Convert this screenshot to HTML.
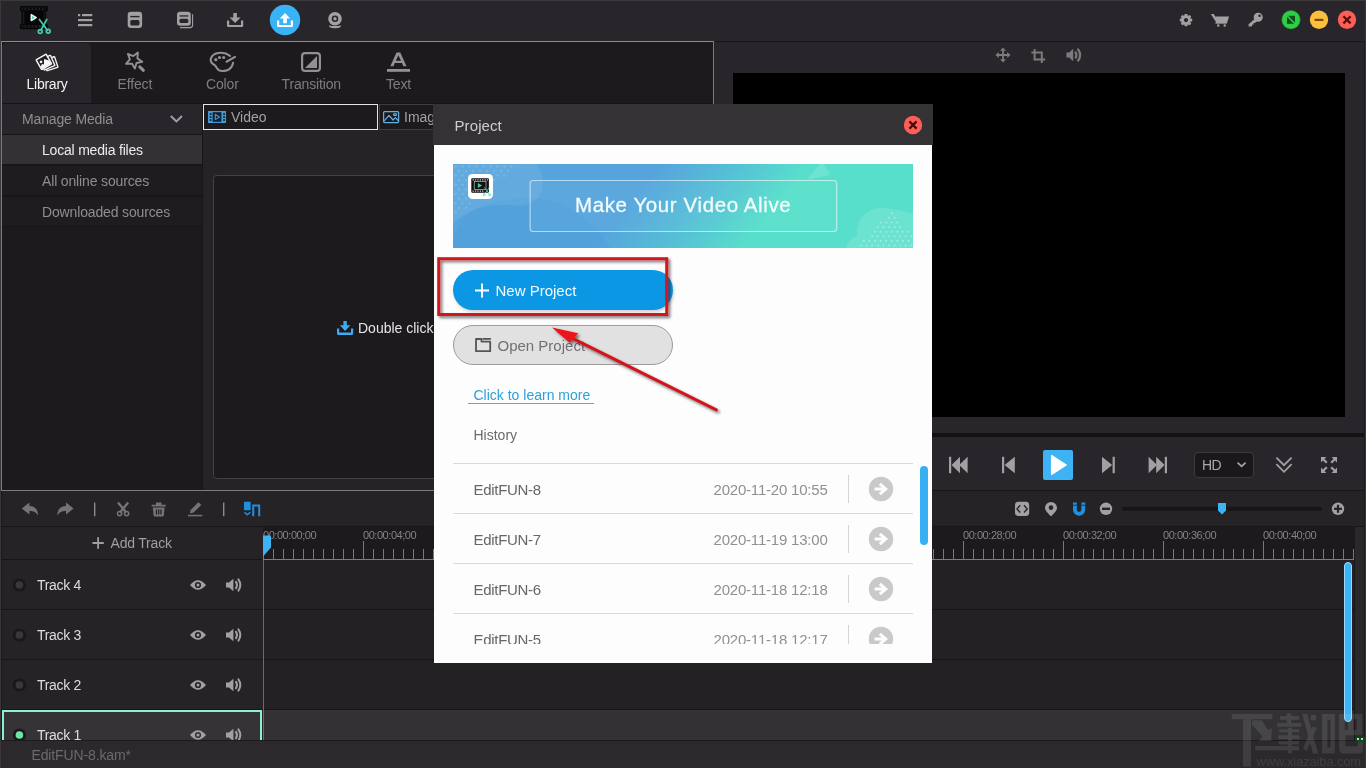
<!DOCTYPE html>
<html>
<head>
<meta charset="utf-8">
<title>EditFUN</title>
<style>
*{box-sizing:border-box;margin:0;padding:0}
html,body{width:1366px;height:768px;overflow:hidden;background:#252326;font-family:"Liberation Sans",sans-serif;}
#app{will-change:transform;position:fixed;left:0;top:0;width:1366px;height:768px;overflow:hidden;background:#252326;}
.abs{position:absolute}
.t{position:absolute;white-space:nowrap;line-height:1}
svg{position:absolute;overflow:visible}
/* top bar */
#topbar{left:0;top:0;width:1366px;height:41px;background:#28262a}
/* left panel */
#leftpanel{left:1px;top:41px;width:713px;height:450px;border:1px solid #7d7b7e;border-top-color:#8e8c8f;background:#252326}
#tabbar{left:2px;top:42px;width:711px;height:62px;background:#1c1a1d}
#tab-lib{left:2px;top:43px;width:89px;height:61px;background:#28262a;border-radius:5px 5px 0 0}
.tablabel{font-size:14px;color:#7f7d80;letter-spacing:-0.150px}
#sidebar{left:2px;top:104px;width:201px;height:386px;background:#171518}
.srow{left:2px;width:200px;height:29px;background:#1e1c1f}
.stext{font-size:14px;color:#8f8d90;letter-spacing:-0.150px}
#droparea{left:213px;top:175px;width:260px;height:304px;background:#1c1a1d;border:1px solid #434144;border-radius:3.500px}
/* right panel */
#preview{left:733px;top:73px;width:612px;height:344px;background:#000}
/* timeline */
.trow{left:2px;width:260px;height:49px;background:#252326}
.hline{height:1px;background:#161417;left:0}
.ttext{font-size:14px;color:#dddddd;letter-spacing:-0.300px}
.rtext{font-size:11px;color:#858386;letter-spacing:-0.450px}
/* dialog */
#dlg{left:434px;top:104px;width:498px;height:559px;background:#fdfdfd}
#dlgtitle{left:433px;top:104px;width:500px;height:41px;background:#343235}
.hrow{font-size:15px;color:#666}
.hdate{font-size:15px;color:#909090}
.hsep{height:1px;background:#dcdcdc;left:453px;width:460px}
</style>
</head>
<body>
<div id="app">
<div class="abs" id="topbar"></div>
<svg id="svgtop" class="abs" style="left:0;top:0" width="1366" height="41" viewBox="0 0 1366 41">
  <!-- logo -->
  <g>
    <path d="M21.200 6 h25.300 a1.300 1.300 0 0 1 1.300 1.300 v2.600 a1.600 1.600 0 0 1 -1.600 1.600 v12.200 a1.600 1.600 0 0 1 1.600 1.600 v2.600 a1.300 1.300 0 0 1 -1.300 1.300 h-25.300 a1.300 1.300 0 0 1 -1.300 -1.300 v-2.600 a1.600 1.600 0 0 1 1.600 -1.600 v-12.200 a1.600 1.600 0 0 1 -1.600 -1.600 v-2.600 a1.300 1.300 0 0 1 1.300 -1.300 z" fill="#060606"/>
    <rect x="21.600" y="7.600" width="24.600" height="2.600" fill="#232124"/>
    <rect x="21.600" y="25" width="24.600" height="2.600" fill="#232124"/>
    <rect x="22.900" y="11.400" width="1.500" height="12.400" fill="#1c1a1d"/><rect x="44.200" y="11.400" width="1.200" height="12.400" fill="#1c1a1d"/>
    <g fill="#060606"><rect x="22.6" y="8" width="2" height="1.800"/><rect x="26.1" y="8" width="2" height="1.800"/><rect x="29.6" y="8" width="2" height="1.800"/><rect x="33.1" y="8" width="2" height="1.800"/><rect x="36.6" y="8" width="2" height="1.800"/><rect x="40.1" y="8" width="2" height="1.800"/><rect x="43.6" y="8" width="2" height="1.800"/><rect x="22.6" y="25.400" width="2" height="1.800"/><rect x="26.1" y="25.400" width="2" height="1.800"/><rect x="29.6" y="25.400" width="2" height="1.800"/><rect x="33.1" y="25.400" width="2" height="1.800"/><rect x="36.6" y="25.400" width="2" height="1.800"/></g>
    <path d="M31.300 14.600 L31.300 20.600 L36.200 17.600 Z" fill="#4fd0b4" stroke="#e6f7f3" stroke-width="1.500" stroke-linejoin="round"/>
    <g stroke="#46cbae" stroke-width="1.700" fill="none" stroke-linecap="round">
      <path d="M39.400 19.400 L47.400 30.200"/><path d="M46.800 19.400 L41 30.200"/>
      <circle cx="40.200" cy="31.600" r="1.900"/><circle cx="48.200" cy="31.200" r="1.900"/>
    </g>
  </g>
  <!-- menu -->
  <g fill="#a2a0a3">
    <rect x="78" y="14" width="2.2" height="2.2"/><rect x="82" y="14" width="10.3" height="2.2"/>
    <rect x="78" y="19" width="14.3" height="2.2"/>
    <rect x="78" y="24" width="14.3" height="2.2"/>
  </g>
  <!-- save -->
  <g>
    <rect x="127.700" y="11.700" width="14.400" height="16.300" rx="3.200" fill="#a2a0a3"/>
    <rect x="130.300" y="15.900" width="9.200" height="1.400" fill="#28262a"/>
    <rect x="130.300" y="20" width="9.200" height="5.500" rx="1.600" fill="#28262a"/>
  </g>
  <!-- save as -->
  <g>
    <path d="M180 27.600 H190 a2.600 2.600 0 0 0 2.600 -2.600 V14.200" fill="none" stroke="#a2a0a3" stroke-width="1.100"/>
    <rect x="177" y="11.700" width="13.800" height="14" rx="3.200" fill="#a2a0a3"/>
    <rect x="179.500" y="15.300" width="8.800" height="1.300" fill="#28262a"/>
    <rect x="179.500" y="18.800" width="8.800" height="4.300" rx="1.500" fill="#28262a"/>
  </g>
  <!-- download -->
  <g fill="#a2a0a3">
    <path d="M233.3 13 h3.6 v4.4 h3.7 l-5.5 5.6 l-5.5 -5.6 h3.7 z"/>
    <path d="M227 20.6 h2.2 v4.3 h11.8 v-4.3 h2.2 v5.2 a1.3 1.3 0 0 1 -1.3 1.3 h-13.6 a1.3 1.3 0 0 1 -1.3 -1.3 z"/>
  </g>
  <!-- upload circle -->
  <circle cx="285" cy="20" r="15.2" fill="#39b3f7"/>
  <g fill="#ffffff">
    <path d="M283.2 23.2 h3.6 v-4.6 h3.4 l-5.2 -5.6 l-5.2 5.6 h3.4 z"/>
    <path d="M277 20.6 h2.2 v4.3 h11.6 v-4.3 h2.2 v5.2 a1.3 1.3 0 0 1 -1.3 1.3 h-13.4 a1.3 1.3 0 0 1 -1.3 -1.3 z"/>
  </g>
  <!-- webcam -->
  <g>
    <circle cx="335" cy="18.8" r="6.8" fill="#a2a0a3"/>
    <circle cx="335" cy="18.8" r="2.5" fill="none" stroke="#28262a" stroke-width="1.6"/>
    <path d="M329.6 25.3 q5.4 3.2 10.8 0 l0.6 1.4 q-6 3.2 -12 0 z" fill="#a2a0a3"/>
    <rect x="331" y="26" width="8" height="1.8" rx="0.9" fill="#a2a0a3"/>
  </g>
  <!-- gear -->
  <g transform="translate(1186 20.100)">
    <g fill="#a2a0a3">
      <rect x="-1.500" y="-6.200" width="3" height="12.400" rx="0.700"/>
      <rect x="-1.500" y="-6.200" width="3" height="12.400" rx="0.700" transform="rotate(45)"/>
      <rect x="-1.500" y="-6.200" width="3" height="12.400" rx="0.700" transform="rotate(90)"/>
      <rect x="-1.500" y="-6.200" width="3" height="12.400" rx="0.700" transform="rotate(135)"/>
      <circle r="4.800"/>
    </g>
    <circle r="2.100" fill="#28262a"/>
  </g>
  <!-- cart -->
  <g fill="#a2a0a3">
    <path d="M1210.800 14 h3 l1.300 2.600 h14 l-2.100 6.400 h-10.400 z"/>
    <path d="M1215.400 22.400 h11.400 v1.300 h-11.400 z"/>
    <rect x="1217.200" y="24.400" width="2.200" height="2.200"/><rect x="1223.600" y="24.400" width="2.200" height="2.200"/>
  </g>
  <!-- key -->
  <g>
    <circle cx="1258.200" cy="17.200" r="4.500" fill="#a2a0a3"/>
    <circle cx="1259.600" cy="15.800" r="1.300" fill="#28262a"/>
    <path d="M1255.400 18.200 l2.200 2.200 l-2.600 2.600 h-1.400 v1.400 h-1.400 v1.400 l-0.800 0.800 h-2.800 v-2.400 z" fill="#a2a0a3"/>
  </g>
  <!-- window buttons -->
  <circle cx="1291" cy="19.8" r="9.2" fill="#2ecf47"/><circle cx="1291" cy="19.8" r="9.2" fill="none" stroke="#1f9a33" stroke-width="1" opacity=".6"/>
  <path d="M1287 15.8 h8 v8 h-8 z" fill="#0d4f18"/>
  <path d="M1287 15.8 l8 8" stroke="#2ecf47" stroke-width="1.6"/>
  <circle cx="1319" cy="19.8" r="9.2" fill="#fcbf3d"/>
  <rect x="1314.6" y="18.8" width="8.8" height="2.2" fill="#7a4a05"/>
  <circle cx="1347" cy="19.8" r="9.2" fill="#fb5f57"/>
  <path d="M1343.4 16.2 l7.2 7.2 M1350.6 16.2 l-7.2 7.2" stroke="#5c0b08" stroke-width="2.2"/>
</svg>

<div class="abs" id="leftpanel"></div>
<div class="abs" id="tabbar"></div>
<div class="abs" id="tab-lib"></div>
<div class="abs" id="sidebar"></div>
<div class="abs" style="left:2px;top:103px;width:711px;height:1px;background:#151316"></div>
<div class="abs" style="left:2px;top:104px;width:200px;height:30px;background:#28262a"></div>
<div class="abs srow" style="top:135px;background:#333134"></div>
<div class="abs srow" style="top:166px"></div>
<div class="abs srow" style="top:197px"></div>
<div class="abs" style="left:2px;top:227px;width:200px;height:263px;background:#1c1a1d"></div>
<div class="t tablabel" id="tl1" style="left:26.500px;top:77px;color:#f2f2f2;letter-spacing:-0.250px">Library</div>
<div class="t tablabel" id="tl2" style="left:117.500px;top:77px">Effect</div>
<div class="t tablabel" id="tl3" style="left:206px;top:77px">Color</div>
<div class="t tablabel" id="tl4" style="left:281.500px;top:77px">Transition</div>
<div class="t tablabel" id="tl5" style="left:386px;top:77px">Text</div>
<div class="t stext" id="st0" style="left:22px;top:112px">Manage Media</div>
<div class="t stext" id="st1" style="left:42px;top:143px;color:#ececec;letter-spacing:-0.200px">Local media files</div>
<div class="t stext" id="st2" style="left:42px;top:174px">All online sources</div>
<div class="t stext" id="st3" style="left:42px;top:205px">Downloaded sources</div>
<!-- sub tabs -->
<div class="abs" style="left:203px;top:104px;width:511px;height:26px;background:#1c1a1d"></div>
<div class="abs" style="left:203px;top:104px;width:175px;height:26px;border:1px solid #e6e6e6;background:#1c1a1d"></div>
<div class="abs" style="left:379px;top:104px;width:175px;height:26px;border:1px solid #3f3d40"></div>
<div class="t" id="vt" style="left:231px;top:110px;font-size:14px;color:#a3a1a4">Video</div>
<div class="t" id="it" style="left:404px;top:110px;font-size:14px;color:#a3a1a4">Image</div>
<div class="abs" id="droparea"></div>
<div class="t" id="dc" style="left:358px;top:321px;font-size:14px;color:#e4e4e4">Double click</div>
<svg class="abs" style="left:0;top:41px" width="714" height="450" viewBox="0 41 714 450">
  <!-- library icon -->
  <g>
    <g transform="translate(50.750 63.700) rotate(-18)"><rect x="-5.800" y="-5.550" width="11.600" height="11.100" rx="0.500" fill="#28262a" stroke="#f2f2f2" stroke-width="1.400"/></g>
    <g transform="translate(47.400 62.700) rotate(-24)"><rect x="-5.800" y="-5.550" width="11.600" height="11.100" rx="0.500" fill="#28262a" stroke="#f2f2f2" stroke-width="1.400"/></g>
    <g transform="translate(43.850 61.850) rotate(-30)">
      <rect x="-5.750" y="-5.500" width="11.500" height="11" rx="0.500" fill="#201e21" stroke="#f6f6f6" stroke-width="1.500"/>
      <circle cx="-2.400" cy="-1.400" r="1.350" fill="#f6f6f6"/>
      <path d="M-5.200 5 v-2.400 l2.400 -1.600 l1.600 1.300 l2.800 -4.600 l3.600 3.800 v3.500 z" fill="#f6f6f6"/>
    </g>
  </g>
  <!-- effect icon -->
  <g fill="none" stroke="#929093" stroke-width="1.900" stroke-linejoin="round">
    <path d="M137.9 52.5 L137.4 58.4 L142.3 61.7 L136.5 63.0 L134.9 68.6 L131.9 63.6 L126.0 63.8 L129.9 59.4 L127.9 53.9 L133.3 56.1 Z"/>
    <path d="M139.800 66.800 l3.600 3.500" stroke-width="3" stroke-linecap="round"/>
  </g>
  <!-- color icon -->
  <g fill="none" stroke="#929093" stroke-width="2.100" stroke-linecap="round" stroke-linejoin="round">
    <path d="M230 55.800 C227 53.500 224 52.800 221.300 52.800 C217 52.800 214 54 212.400 55.900 C210.600 58 210.300 60.600 211.400 62.400 C212.200 63.700 214 64.400 215.200 65.600 C216.500 67 216.800 68.600 218.400 69.800 C220 71 222.500 71.200 224.500 70.900 C227.500 70.500 230 69 231.500 66.800 C232.400 65.500 232.900 64 233 62.700"/>
    <path d="M226.600 61.700 l8.400 -4.800" stroke-width="2.200"/>
  </g>
  <g fill="#929093"><circle cx="215.800" cy="59.700" r="1.650"/><circle cx="219.500" cy="57.500" r="1.600"/><circle cx="223.700" cy="57.500" r="1.600"/></g>
  <!-- transition icon -->
  <rect x="302.100" y="53.100" width="17.800" height="17.800" rx="3" fill="none" stroke="#929093" stroke-width="2.200"/>
  <path d="M305 68 h12 v-12 z" fill="#929093"/>
  <!-- text icon -->
  <g fill="#929093">
    <path d="M396.500 52.600 h3.800 l6.200 13.600 h-3.200 l-1.300 -3.100 h-7.200 l-1.300 3.100 h-3.200 z M398.400 55.600 l-2.600 5.200 h5.200 z" fill-rule="evenodd"/>
    <rect x="387" y="69" width="23" height="2.800"/>
  </g>
  <!-- chevron -->
  <path d="M170.8 116 l5.6 5.4 l5.6 -5.4" fill="none" stroke="#a2a0a3" stroke-width="2"/>
  <!-- video icon -->
  <g>
    <rect x="208" y="111" width="18" height="12" fill="#4199d6"/>
    <rect x="212.600" y="112.200" width="8.800" height="9.600" fill="#14202b"/>
    <g fill="#102a40"><rect x="209.7" y="113.1" width="1.700" height="1.900"/><rect x="209.7" y="116.1" width="1.700" height="1.900"/><rect x="209.7" y="119.1" width="1.700" height="1.900"/><rect x="223.2" y="113.1" width="1.700" height="1.900"/><rect x="223.2" y="116.1" width="1.700" height="1.900"/><rect x="223.2" y="119.1" width="1.700" height="1.900"/></g>
    <path d="M215.300 114.400 v5.200 l4.200 -2.600 z" fill="none" stroke="#4199d6" stroke-width="1.100" stroke-linejoin="round"/>
  </g>
  <!-- image icon -->
  <g fill="none" stroke="#62aee0" stroke-width="1.250">
    <rect x="383.600" y="111.600" width="15" height="11" rx="1"/>
    <path d="M384 121.200 l5 -5.800 l4 4.600 l2.400 -2.400 l3.200 3.400" stroke-linejoin="round"/>
    <ellipse cx="395" cy="114.600" rx="1.500" ry="1"/>
  </g>
  <!-- double click dl icon -->
  <g fill="#3dacf0">
    <path d="M343.4 321 h3.4 v4.2 h3.6 l-5.3 5.8 l-5.3 -5.8 h3.6 z"/>
    <path d="M337 328.4 h2.2 v4.2 h11.8 v-4.2 h2.2 v5.2 a1.3 1.3 0 0 1 -1.3 1.3 h-13.6 a1.3 1.3 0 0 1 -1.3 -1.3 z"/>
  </g>
</svg>

<div class="abs" style="left:715px;top:42px;width:649px;height:448px;background:#28262a"></div>
<div class="abs" style="left:715px;top:41px;width:651px;height:1px;background:#19171a"></div>
<div class="abs" style="left:1364px;top:41px;width:1px;height:700px;background:#1b191c"></div>
<div class="abs" id="preview"></div>
<div class="abs" style="left:715px;top:433px;width:649px;height:4px;background:#131114"></div>
<div class="abs" style="left:1043px;top:450px;width:30px;height:30px;background:#3db3f6;border-radius:2px"></div>
<div class="abs" style="left:1194px;top:452px;width:60px;height:26px;background:#1a181b;border:1px solid #3c3a3d;border-radius:4px"></div>
<div class="t" id="hd" style="left:1202px;top:458px;font-size:14px;color:#a9a7aa;letter-spacing:-0.600px">HD</div>
<div class="abs" style="left:715px;top:490px;width:651px;height:1px;background:#171518"></div>
<svg class="abs" style="left:714px;top:41px" width="652" height="490" viewBox="714 41 652 490">
  <!-- move -->
  <g fill="#7c7a7d">
    <path d="M1003 47.400000000000006 l3 3.4 h-2.1 v3.3 h3.3 v-2.1 l3.4 3 l-3.4 3 v-2.1 h-3.3 v3.3 h2.1 l-3 3.4 l-3 -3.4 h2.1 v-3.3 h-3.3 v2.1 l-3.4 -3 l3.4 -3 v2.1 h3.3 v-3.3 h-2.1 z"/>
  </g>
  <!-- crop -->
  <g fill="none" stroke="#7c7a7d" stroke-width="2">
    <path d="M1034.600 49 v10.600 h10.600"/>
    <path d="M1031.400 52.400 h10.400 v10.600"/>
  </g>
  <!-- volume -->
  <g fill="#7c7a7d">
    <path d="M1066.4 52.4 h2.800000000000001 l4 -3.6 v12.4 l-4 -3.6 h-2.800000000000001 z"/>
  </g>
  <g fill="none" stroke="#7c7a7d" stroke-width="2.200" stroke-linecap="butt">
    <path d="M1075.200 51.600 q2.400 3.400 0 6.800"/>
    <path d="M1077.600 48.600 q5 6.400 0 12.800"/>
  </g>
  <!-- player controls -->
  <g fill="#a2a0a3">
    <rect x="949" y="456.800" width="2.200" height="16.400"/>
    <path d="M960 456.800 v16.400 l-8.400 -8.200 z"/><path d="M967.600 456.800 v16.400 l-8.400 -8.200 z"/>
    <rect x="1002" y="456.800" width="2.200" height="16.400"/>
    <path d="M1014.800 456.800 v16.400 l-10.200 -8.200 z"/>
    <path d="M1102 456.800 v16.400 l10.200 -8.200 z"/>
    <rect x="1112.600" y="456.800" width="2.200" height="16.400"/>
    <path d="M1148.600 456.800 v16.400 l8.400 -8.200 z"/><path d="M1156.200 456.800 v16.400 l8.400 -8.200 z"/>
    <rect x="1164.800" y="456.800" width="2.200" height="16.400"/>
  </g>
  <path d="M1051.6 455.6 v18.8 l14.6 -9.4 z" fill="#ffffff" stroke="#ffffff" stroke-width="1.4" stroke-linejoin="round"/>
  <path d="M1237.6 462.6 l4 3.8 l4 -3.8" fill="none" stroke="#a9a7aa" stroke-width="1.6"/>
  <g fill="none" stroke="#a2a0a3" stroke-width="1.8">
    <path d="M1276.400 457.600 l7.600 7.600 l7.600 -7.600"/>
    <path d="M1276.400 464.200 l7.600 7.600 l7.600 -7.600"/>
  </g>
  <!-- fullscreen -->
  <g fill="#a2a0a3">
    <path d="M1321 457 h5.4 l-1.9 1.9 l3.1 3.1 l-1.6 1.6 l-3.1 -3.1 l-1.9 1.9 z"/>
    <path d="M1337 457 v5.4 l-1.9 -1.9 l-3.1 3.1 l-1.6 -1.6 l3.1 -3.1 l-1.9 -1.9 z"/>
    <path d="M1321 473 v-5.4 l1.9 1.9 l3.1 -3.1 l1.6 1.6 l-3.1 3.1 l1.9 1.9 z"/>
    <path d="M1337 473 h-5.4 l1.9 -1.9 l-3.1 -3.1 l1.6 -1.6 l3.1 3.1 l1.9 -1.9 z"/>
  </g>
  <!-- zoom tools -->
  <rect x="1015" y="501.800" width="14.200" height="14.200" rx="3.400" fill="#a2a0a3"/>
  <path d="M1020.200 505.300 l-3.200 3.600 l3.200 3.600 M1024 505.300 l3.200 3.600 l-3.200 3.600" fill="none" stroke="#252326" stroke-width="1.400"/>
  <path d="M1051 502 a6 6 0 0 1 6 6 c0 3.400 -6 8.200 -6 8.200 s-6 -4.800 -6 -8.200 a6 6 0 0 1 6 -6 z" fill="#a2a0a3"/>
  <circle cx="1051" cy="507.600" r="2.300" fill="#252326"/>
  <path d="M1073 502.6 h3.8 v7 a2.3 2.3 0 0 0 4.6 0 v-7 h3.8 v7 a6.1 6.1 0 0 1 -12.2 0 z" fill="#1f8fe0"/>
  <path d="M1073 505.300 h3.800 M1081.400 505.300 h3.800" stroke="#1b3a55" stroke-width="1.100"/>
  <circle cx="1106" cy="508.8" r="6.2" fill="#a2a0a3"/><rect x="1102" y="507.600" width="8" height="2.400" fill="#252326"/>
  <rect x="1122" y="506.8" width="200" height="4" rx="2" fill="#171518"/>
  <path d="M1218 503 h8 v7.6 l-4 3.8 l-4 -3.8 z" fill="#3db3f6"/>
  <circle cx="1338" cy="508.8" r="6.2" fill="#a2a0a3"/><rect x="1334" y="507.700" width="8" height="2.200" fill="#252326"/><rect x="1336.900" y="504.800" width="2.200" height="8" fill="#252326"/>
</svg>

<div class="abs" style="left:1px;top:491px;width:1px;height:250px;background:#1a181b"></div>
<div class="abs" style="left:0;top:526px;width:1366px;height:1px;background:#171518"></div>
<div class="abs" style="left:263px;top:527px;width:1091px;height:32px;background:#1c1a1d"></div>
<div class="abs" style="left:263px;top:559px;width:1091px;height:1px;background:#7e7c7f"></div>
<div class="abs" style="left:2px;top:527px;width:260px;height:32px;background:#252326"></div>
<div class="abs" style="left:2px;top:559px;width:260px;height:1px;background:#171518"></div>
<div class="t" id="at" style="left:110.500px;top:536px;font-size:14px;color:#a09ea1;letter-spacing:-0.200px">Add Track</div>
<div class="abs" style="left:2px;top:560px;width:260px;height:49px;background:#252326"></div>
<div class="abs" style="left:264px;top:560px;width:1090px;height:49px;background:#232124"></div>
<div class="abs" style="left:2px;top:609px;width:1352px;height:1px;background:#171518"></div>
<div class="t ttext" id="tr4" style="left:37px;top:578px">Track 4</div>
<div class="abs" style="left:2px;top:610px;width:260px;height:49px;background:#252326"></div>
<div class="abs" style="left:264px;top:610px;width:1090px;height:49px;background:#232124"></div>
<div class="abs" style="left:2px;top:659px;width:1352px;height:1px;background:#171518"></div>
<div class="t ttext" id="tr3" style="left:37px;top:628px">Track 3</div>
<div class="abs" style="left:2px;top:660px;width:260px;height:49px;background:#252326"></div>
<div class="abs" style="left:264px;top:660px;width:1090px;height:49px;background:#232124"></div>
<div class="abs" style="left:2px;top:709px;width:1352px;height:1px;background:#171518"></div>
<div class="t ttext" id="tr2" style="left:37px;top:678px">Track 2</div>
<div class="abs" style="left:2px;top:710px;width:260px;height:49px;background:#353336"></div>
<div class="abs" style="left:264px;top:710px;width:1090px;height:49px;background:#333134"></div>
<div class="t ttext" id="tr1" style="left:37px;top:728px">Track 1</div>
<div class="abs" style="left:2px;top:710px;width:260px;height:40px;border:2px solid #8cf0d6;border-bottom:none"></div>
<div class="abs" style="left:263px;top:541px;width:1px;height:19px;background:#8a888b"></div><div class="abs" style="left:263px;top:560px;width:1px;height:181px;background:#6c6a6d"></div>
<div class="t rtext" id="rl0" style="left:263px;top:530px">00:00:00;00</div>
<div class="t rtext" id="rl1" style="left:363px;top:530px">00:00:04;00</div>
<div class="t rtext" id="rl7" style="left:963px;top:530px">00:00:28;00</div>
<div class="t rtext" id="rl8" style="left:1063px;top:530px">00:00:32;00</div>
<div class="t rtext" id="rl9" style="left:1163px;top:530px">00:00:36;00</div>
<div class="t rtext" id="rl10" style="left:1263px;top:530px">00:00:40;00</div>
<svg class="abs" style="left:0;top:491px" width="1366" height="277" viewBox="0 491 1366 277">
<path d="M263.5 541 V559 M273.5 549 V559 M283.5 549 V559 M293.5 549 V559 M303.5 549 V559 M313.5 549 V559 M323.5 549 V559 M333.5 549 V559 M343.5 549 V559 M353.5 549 V559 M363.5 541 V559 M373.5 549 V559 M383.5 549 V559 M393.5 549 V559 M403.5 549 V559 M413.5 549 V559 M423.5 549 V559 M433.5 549 V559 M443.5 549 V559 M453.5 549 V559 M463.5 541 V559 M473.5 549 V559 M483.5 549 V559 M493.5 549 V559 M503.5 549 V559 M513.5 549 V559 M523.5 549 V559 M533.5 549 V559 M543.5 549 V559 M553.5 549 V559 M563.5 541 V559 M573.5 549 V559 M583.5 549 V559 M593.5 549 V559 M603.5 549 V559 M613.5 549 V559 M623.5 549 V559 M633.5 549 V559 M643.5 549 V559 M653.5 549 V559 M663.5 541 V559 M673.5 549 V559 M683.5 549 V559 M693.5 549 V559 M703.5 549 V559 M713.5 549 V559 M723.5 549 V559 M733.5 549 V559 M743.5 549 V559 M753.5 549 V559 M763.5 541 V559 M773.5 549 V559 M783.5 549 V559 M793.5 549 V559 M803.5 549 V559 M813.5 549 V559 M823.5 549 V559 M833.5 549 V559 M843.5 549 V559 M853.5 549 V559 M863.5 541 V559 M873.5 549 V559 M883.5 549 V559 M893.5 549 V559 M903.5 549 V559 M913.5 549 V559 M923.5 549 V559 M933.5 549 V559 M943.5 549 V559 M953.5 549 V559 M963.5 541 V559 M973.5 549 V559 M983.5 549 V559 M993.5 549 V559 M1003.5 549 V559 M1013.5 549 V559 M1023.5 549 V559 M1033.5 549 V559 M1043.5 549 V559 M1053.5 549 V559 M1063.5 541 V559 M1073.5 549 V559 M1083.5 549 V559 M1093.5 549 V559 M1103.5 549 V559 M1113.5 549 V559 M1123.5 549 V559 M1133.5 549 V559 M1143.5 549 V559 M1153.5 549 V559 M1163.5 541 V559 M1173.5 549 V559 M1183.5 549 V559 M1193.5 549 V559 M1203.5 549 V559 M1213.5 549 V559 M1223.5 549 V559 M1233.5 549 V559 M1243.5 549 V559 M1253.5 549 V559 M1263.5 541 V559 M1273.5 549 V559 M1283.5 549 V559 M1293.5 549 V559 M1303.5 549 V559 M1313.5 549 V559 M1323.5 549 V559 M1333.5 549 V559 M1343.5 549 V559 M1353.5 549 V559" stroke="#7a787b" stroke-width="1" fill="none" shape-rendering="crispEdges"/>
<path d="M263 535.400 h6.600 a1.400 1.400 0 0 1 1.400 1.400 v10.800 l-8 8.800 z" fill="#3db3f6"/>
<g fill="#757376">
<path d="M29.4 502.6 v3.4 c5.2 0 8.4 3 8.800000000000001 9.6 c-2 -3.4 -4.6 -4.6 -8.8 -4.600 v3.6 l-7.6 -6 z"/>
<path d="M66 502.6 v3.4 c-5.2 0 -8.4 3 -8.800000000000001 9.6 c2 -3.4 4.6 -4.6 8.8 -4.600 v3.6 l7.6 -6 z"/>
<rect x="94" y="502.600" width="1.400" height="13.600" fill="#8c8a8d"/>
<rect x="223" y="502.600" width="1.400" height="13.600" fill="#8c8a8d"/>
</g>
<g fill="none" stroke="#757376" stroke-width="1.5">
<path d="M118 502.400 l8.200 10 M128.200 502.400 l-8.200 10" stroke-width="2.400"/>
<circle cx="119.6" cy="513.6" r="2.1"/><circle cx="126.6" cy="513.6" r="2.1"/>
</g>
<g fill="#757376">
<path d="M151.6 504.8 h14.2 v1.8 h-14.2 z M156 502.6 h5.4 v2.2 h-5.4 z"/>
<path d="M152.8 507.6 h11.8 l-0.8 8 a0.9 0.9 0 0 1 -0.9 0.8 h-8.4 a0.9 0.9 0 0 1 -0.9 -0.8 z M155.800 509.4 v5 h1.300 v-5 z M158.050 509.4 v5 h1.300 v-5 z M160.300 509.4 v5 h1.300 v-5 z" fill-rule="evenodd"/>
<path d="M198.400 502.200 l2.800 2.800 l-7.600 7.600 l-3.800 1 l1 -3.800 z"/>
<rect x="188" y="514.8" width="14.4" height="1.5"/>
</g>
<g fill="#1f8fe0">
<rect x="244" y="501.8" width="6.6" height="8.4" rx="0.6"/>
<path d="M252.200 504.400 h8 v11.800 h-2 v-9.800 h-4 v9.800 h-2 z"/>
</g>
<path d="M244.400 512.200 l2.900 2.600 l2.900 -2.600" fill="none" stroke="#1f8fe0" stroke-width="1.5"/>
<path d="M92.400 543 h11.400 M98.100 537.300 v11.400" stroke="#a09ea1" stroke-width="1.8" fill="none"/>
<circle cx="19.4" cy="585" r="6.6" fill="#1a181b"/><circle cx="19.400" cy="585" r="3.8" fill="#39373a"/>
<path d="M190 585 q8 -9.4 16 0 q-8 9.4 -16 0 z" fill="#a2a0a3"/><circle cx="198" cy="585" r="3.1" fill="#252326"/><circle cx="198" cy="585" r="1.5" fill="#a2a0a3"/>
<path d="M226 582.6 h3 l4.400 -3.8 v12.400 l-4.400 -3.800 h-3 z" fill="#a2a0a3"/><g fill="none" stroke="#a2a0a3" stroke-width="2" stroke-linecap="round"><path d="M236 581.8 q2 3.200 0 6.400"/><path d="M238.400 579.4 q3.800 5.600 0 11.200"/></g>
<circle cx="19.4" cy="635" r="6.6" fill="#1a181b"/><circle cx="19.400" cy="635" r="3.8" fill="#39373a"/>
<path d="M190 635 q8 -9.4 16 0 q-8 9.4 -16 0 z" fill="#a2a0a3"/><circle cx="198" cy="635" r="3.1" fill="#252326"/><circle cx="198" cy="635" r="1.5" fill="#a2a0a3"/>
<path d="M226 632.6 h3 l4.400 -3.8 v12.400 l-4.400 -3.800 h-3 z" fill="#a2a0a3"/><g fill="none" stroke="#a2a0a3" stroke-width="2" stroke-linecap="round"><path d="M236 631.8 q2 3.200 0 6.400"/><path d="M238.400 629.4 q3.800 5.600 0 11.200"/></g>
<circle cx="19.4" cy="685" r="6.6" fill="#1a181b"/><circle cx="19.400" cy="685" r="3.8" fill="#39373a"/>
<path d="M190 685 q8 -9.4 16 0 q-8 9.4 -16 0 z" fill="#a2a0a3"/><circle cx="198" cy="685" r="3.1" fill="#252326"/><circle cx="198" cy="685" r="1.5" fill="#a2a0a3"/>
<path d="M226 682.6 h3 l4.400 -3.8 v12.400 l-4.400 -3.800 h-3 z" fill="#a2a0a3"/><g fill="none" stroke="#a2a0a3" stroke-width="2" stroke-linecap="round"><path d="M236 681.8 q2 3.200 0 6.400"/><path d="M238.400 679.4 q3.800 5.600 0 11.200"/></g>
<circle cx="19.4" cy="735" r="6.6" fill="#1a181b"/><circle cx="19.400" cy="735" r="3.8" fill="#6fe3a3"/>
<path d="M190 735 q8 -9.4 16 0 q-8 9.4 -16 0 z" fill="#a2a0a3"/><circle cx="198" cy="735" r="3.1" fill="#353336"/><circle cx="198" cy="735" r="1.5" fill="#a2a0a3"/>
<path d="M226 732.6 h3 l4.400 -3.8 v12.400 l-4.400 -3.800 h-3 z" fill="#a2a0a3"/><g fill="none" stroke="#a2a0a3" stroke-width="2" stroke-linecap="round"><path d="M236 731.8 q2 3.200 0 6.400"/><path d="M238.400 729.4 q3.800 5.600 0 11.200"/></g>
</svg>
<div class="abs" style="left:1344px;top:562px;width:8px;height:160px;background:#3db3f6;border:1px solid #9fd9fb;border-radius:4px"></div>
<div class="abs" style="left:1355px;top:527px;width:9px;height:214px;background:#2a282b"></div><div class="abs" style="left:1354px;top:527px;width:1px;height:214px;background:#1a181b"></div>
<div class="abs" style="left:0;top:741px;width:1366px;height:27px;background:#2b292c"></div>
<div class="abs" style="left:0;top:740px;width:1366px;height:1px;background:#1c1a1d"></div>
<div class="t" id="stt" style="left:31.500px;top:748px;font-size:14px;color:#6c6a6d;letter-spacing:-0.130px">EditFUN-8.kam*</div>
<div class="abs" style="left:1355px;top:737px;width:11px;height:4px;background:#0b4a12"></div><div class="abs" style="left:1357px;top:738px;width:2px;height:2px;background:#9df0a0"></div><div class="abs" style="left:1361px;top:738px;width:2px;height:2px;background:#9df0a0"></div>
<svg class="abs" style="left:1226px;top:708px" width="140" height="60" viewBox="1226 708 140 60">
<g fill="#ffffff" opacity="0.095">
<rect x="1231.800" y="713.900" width="40.600" height="5.300"/>
<rect x="1243" y="719.200" width="8" height="47.300"/>
<path d="M1252.100 720.300 L1261.700 720.300 L1268.100 729.900 L1271.800 728 L1271.300 741.100 L1258.700 741.100 L1262.500 736.300 L1252.100 725.100 Z"/>
<rect x="1255.300" y="746" width="43.700" height="4.300"/>
<rect x="1279.900" y="716" width="19.200" height="3.800"/>
<rect x="1286.800" y="713.400" width="4.300" height="11.200"/>
<rect x="1277.200" y="723" width="24" height="3.700"/>
<rect x="1279.300" y="729.400" width="19.800" height="2.800"/>
<rect x="1278.300" y="735.300" width="21.400" height="3.700"/>
<rect x="1287.900" y="727.800" width="4.200" height="25.600"/>
<rect x="1278.800" y="741.300" width="20.300" height="3.200"/>
<path d="M1302.300 713.900 h4.800 l11 39.500 h-5.200 z"/>
<path d="M1316.900 727.800 l-4.600 -1 l-9.200 21.400 l3.400 3.400 z"/>
<rect x="1310.800" y="715" width="5.300" height="5.300"/>
<path d="M1322 713.900 h12.900 v39.500 h-12.900 z M1327.400 719.800 v27.800 h3.200 v-27.800 z" fill-rule="evenodd"/>
<path d="M1339.200 713.900 h23 v21.400 h-16.800 v10.900 h12.400 v-4.600 h5.400 v7.600 a4.200 4.200 0 0 1 -4.200 4.200 h-15.600 a4.200 4.200 0 0 1 -4.200 -4.200 z M1344.600 719.200 v10.800 h3.400 v-10.800 z M1353.200 719.200 v10.800 h3.600 v-10.800 z" fill-rule="evenodd"/>
</g></svg>
<div class="t" id="wmt" style="left:1256.500px;top:754.500px;font-size:13px;color:rgba(255,255,255,0.095);letter-spacing:-0.150px">www.xiazaiba.com</div>
<div class="abs" style="left:0;top:0;width:1366px;height:1px;background:#3a383b"></div><div class="abs" style="left:0;top:0;width:1px;height:768px;background:#3a383b"></div><div class="abs" style="left:1365px;top:0;width:1px;height:768px;background:#3a383b"></div>
<div class="abs" id="dlg"></div>
<div class="abs" id="dlgtitle"></div>
<div class="t" id="dt" style="left:454.500px;top:118px;font-size:15px;color:#cfcdd0;letter-spacing:0.100px">Project</div>
<svg class="abs" style="left:900px;top:112px" width="26" height="26" viewBox="900 112 26 26"><circle cx="913" cy="125" r="9.200" fill="#fb5f57"/><path d="M909.400 121.400 l7.200 7.200 M916.600 121.400 l-7.200 7.200" stroke="#4a0806" stroke-width="2.200"/></svg>
<svg class="abs" style="left:453px;top:164px" width="460" height="84" viewBox="453 164 460 84">
<defs><linearGradient id="bg1" gradientUnits="userSpaceOnUse" x1="668" y1="153" x2="760" y2="227">
<stop offset="0" stop-color="#56a4dd"/><stop offset="0.500" stop-color="#55bfd6"/><stop offset="1" stop-color="#58dfcb"/></linearGradient>
<clipPath id="bc"><rect x="453" y="164" width="460" height="84"/></clipPath></defs>
<rect x="453" y="164" width="460" height="84" fill="url(#bg1)"/>
<g clip-path="url(#bc)">
<path d="M453 164 h84 q8 14 5 26 q-4 14 -22 16 q-26 -4 -46 4 q-12 5 -21 14 z" fill="#ffffff" opacity="0.080"/>
<path d="M453 248 v-6 q8 -30 32 -38 q26 -8 56 -5 q40 6 70 49 z" fill="#1d6fc0" opacity="0.050"/>
<path d="M913 214 q-14 -4 -26 -6 q-20 -2 -28 14 q-3 10 -2 14 q-8 2 -11 12 h67 z" fill="#ffffff" opacity="0.120"/>
<path d="M807 179.500 l13 -15.500 h4 l6 11 z" fill="#ffffff" opacity="0.140"/>
<g fill="#ffffff" opacity="0.150"><circle cx="455.5" cy="166.5" r="1.150"/><circle cx="462.5" cy="166.5" r="1.150"/><circle cx="469.5" cy="166.5" r="1.150"/><circle cx="476.5" cy="166.5" r="1.150"/><circle cx="483.5" cy="166.5" r="1.150"/><circle cx="490.5" cy="166.5" r="1.150"/><circle cx="497.5" cy="166.5" r="1.150"/><circle cx="504.5" cy="166.5" r="1.150"/><circle cx="511.5" cy="166.5" r="1.150"/><circle cx="459.0" cy="171.1" r="1.150"/><circle cx="466.0" cy="171.1" r="1.150"/><circle cx="473.0" cy="171.1" r="1.150"/><circle cx="480.0" cy="171.1" r="1.150"/><circle cx="487.0" cy="171.1" r="1.150"/><circle cx="494.0" cy="171.1" r="1.150"/><circle cx="501.0" cy="171.1" r="1.150"/><circle cx="508.0" cy="171.1" r="1.150"/><circle cx="455.5" cy="175.7" r="1.150"/><circle cx="462.5" cy="175.7" r="1.150"/><circle cx="469.5" cy="175.7" r="1.150"/><circle cx="476.5" cy="175.7" r="1.150"/><circle cx="483.5" cy="175.7" r="1.150"/><circle cx="490.5" cy="175.7" r="1.150"/><circle cx="497.5" cy="175.7" r="1.150"/><circle cx="504.5" cy="175.7" r="1.150"/><circle cx="459.0" cy="180.3" r="1.150"/><circle cx="466.0" cy="180.3" r="1.150"/><circle cx="473.0" cy="180.3" r="1.150"/><circle cx="480.0" cy="180.3" r="1.150"/><circle cx="487.0" cy="180.3" r="1.150"/><circle cx="494.0" cy="180.3" r="1.150"/><circle cx="455.5" cy="184.9" r="1.150"/><circle cx="462.5" cy="184.9" r="1.150"/><circle cx="469.5" cy="184.9" r="1.150"/><circle cx="476.5" cy="184.9" r="1.150"/><circle cx="483.5" cy="184.9" r="1.150"/><circle cx="490.5" cy="184.9" r="1.150"/><circle cx="459.0" cy="189.5" r="1.150"/><circle cx="466.0" cy="189.5" r="1.150"/><circle cx="473.0" cy="189.5" r="1.150"/><circle cx="480.0" cy="189.5" r="1.150"/><circle cx="487.0" cy="189.5" r="1.150"/><circle cx="455.5" cy="194.1" r="1.150"/><circle cx="462.5" cy="194.1" r="1.150"/><circle cx="469.5" cy="194.1" r="1.150"/><circle cx="476.5" cy="194.1" r="1.150"/><circle cx="459.0" cy="198.7" r="1.150"/><circle cx="466.0" cy="198.7" r="1.150"/><circle cx="473.0" cy="198.7" r="1.150"/><circle cx="455.5" cy="203.3" r="1.150"/><circle cx="462.5" cy="203.3" r="1.150"/><circle cx="469.5" cy="203.3" r="1.150"/><circle cx="459.0" cy="207.9" r="1.150"/><circle cx="466.0" cy="207.9" r="1.150"/><circle cx="455.5" cy="212.5" r="1.150"/></g>
<g fill="#ffffff" opacity="0.340"><circle cx="861.0" cy="245.5" r="1.050"/><circle cx="866.6" cy="245.5" r="1.050"/><circle cx="872.2" cy="245.5" r="1.050"/><circle cx="877.8" cy="245.5" r="1.050"/><circle cx="883.4" cy="245.5" r="1.050"/><circle cx="889.0" cy="245.5" r="1.050"/><circle cx="894.6" cy="245.5" r="1.050"/><circle cx="900.2" cy="245.5" r="1.050"/><circle cx="905.8" cy="245.5" r="1.050"/><circle cx="911.4" cy="245.5" r="1.050"/><circle cx="863.8" cy="240.9" r="1.050"/><circle cx="869.4" cy="240.9" r="1.050"/><circle cx="875.0" cy="240.9" r="1.050"/><circle cx="880.6" cy="240.9" r="1.050"/><circle cx="886.2" cy="240.9" r="1.050"/><circle cx="891.8" cy="240.9" r="1.050"/><circle cx="897.4" cy="240.9" r="1.050"/><circle cx="903.0" cy="240.9" r="1.050"/><circle cx="908.6" cy="240.9" r="1.050"/><circle cx="872.2" cy="236.3" r="1.050"/><circle cx="877.8" cy="236.3" r="1.050"/><circle cx="883.4" cy="236.3" r="1.050"/><circle cx="889.0" cy="236.3" r="1.050"/><circle cx="894.6" cy="236.3" r="1.050"/><circle cx="900.2" cy="236.3" r="1.050"/><circle cx="905.8" cy="236.3" r="1.050"/><circle cx="911.4" cy="236.3" r="1.050"/><circle cx="875.0" cy="231.7" r="1.050"/><circle cx="880.6" cy="231.7" r="1.050"/><circle cx="886.2" cy="231.7" r="1.050"/><circle cx="891.8" cy="231.7" r="1.050"/><circle cx="897.4" cy="231.7" r="1.050"/><circle cx="903.0" cy="231.7" r="1.050"/><circle cx="908.6" cy="231.7" r="1.050"/><circle cx="877.8" cy="227.1" r="1.050"/><circle cx="883.4" cy="227.1" r="1.050"/><circle cx="889.0" cy="227.1" r="1.050"/><circle cx="894.6" cy="227.1" r="1.050"/><circle cx="900.2" cy="227.1" r="1.050"/><circle cx="880.6" cy="222.5" r="1.050"/><circle cx="886.2" cy="222.5" r="1.050"/><circle cx="891.8" cy="222.5" r="1.050"/><circle cx="897.4" cy="222.5" r="1.050"/><circle cx="889.0" cy="217.9" r="1.050"/><circle cx="894.6" cy="217.9" r="1.050"/><circle cx="891.8" cy="213.3" r="1.050"/></g>
</g>
<rect x="530.100" y="180.500" width="306.600" height="51" rx="3" fill="#ffffff" fill-opacity="0.035" stroke="#ffffff" stroke-opacity="0.580" stroke-width="1.150"/>
<rect x="468" y="174" width="25" height="25" rx="4.500" fill="#ffffff"/>
<g>
<rect x="471.300" y="178.200" width="17.600" height="14.600" rx="1" fill="#111"/>
<path d="M472.500 179.900 h15.500 M472.500 191.100 h11" stroke="#fff" stroke-width="1" stroke-dasharray="1.300 1.100"/>
<rect x="474.200" y="181.600" width="11.800" height="7.800" fill="#111" stroke="#dcdcdc" stroke-width="0.600"/>
<path d="M477.800 183 v5 l4.400 -2.500 z" fill="#3fc7a8"/>
<g stroke="#58d6ba" stroke-width="0.850" fill="none"><path d="M484.400 187.400 l4.800 6.400 M489.400 187.400 l-4.800 6.400"/><circle cx="484.200" cy="194.800" r="1.050"/><circle cx="489.600" cy="194.800" r="1.050"/></g>
</g>
</svg>
<div class="t" id="mk" style="left:575px;top:195px;font-size:20.500px;color:#f2fcfc;letter-spacing:0.600px;-webkit-text-stroke:0.300px #f2fcfc">Make Your Video Alive</div>
<div class="abs" style="left:453px;top:270px;width:220px;height:40px;border-radius:20px;background:#0c97e5;box-shadow:1px 2px 3px rgba(0,0,0,0.180)"></div>
<div class="t" id="np" style="left:495.500px;top:283px;font-size:15px;color:#f4fbff">New Project</div>
<div class="abs" style="left:453px;top:325px;width:220px;height:40px;border-radius:20px;background:#e2e1e2;border:1px solid #9b9b9b"></div>
<div class="t" id="op" style="left:497.500px;top:337.500px;font-size:15px;color:#707070">Open Project</div>
<div class="t" id="cl" style="left:473.500px;top:387.500px;font-size:14px;color:#2f9fd9">Click to learn more</div>
<div class="abs" style="left:468px;top:403px;width:126px;height:1px;background:#4fb0d6"></div>
<div class="t" id="hi" style="left:473.500px;top:427.500px;font-size:14px;color:#6a6a6a">History</div>
<div class="abs" id="hlist" style="left:453px;top:463px;width:470px;height:181px;overflow:hidden">
<div class="abs" style="left:0;top:0px;width:460px;height:1px;background:#dadada"></div>
<div class="t hrow" id="hn0" style="left:20.500px;top:19px;letter-spacing:-0.300px">EditFUN-8</div>
<div class="t hdate" id="hd0" style="left:260.500px;top:19px;letter-spacing:-0.200px">2020-11-20 10:55</div>
<div class="abs" style="left:395px;top:12px;width:1px;height:28px;background:#d4d4d4"></div>
<svg class="abs" style="left:415px;top:13px" width="26" height="26" viewBox="-13 -13 26 26"><circle r="12.200" fill="#c9c9c9"/><path d="M-6.400 0 H4 M-1.200 -5.200 L4.800 0 L-1.200 5.200" fill="none" stroke="#fdfdfd" stroke-width="3" stroke-linejoin="miter"/></svg>
<div class="abs" style="left:0;top:50px;width:460px;height:1px;background:#dadada"></div>
<div class="t hrow" id="hn1" style="left:20.500px;top:69px;letter-spacing:-0.300px">EditFUN-7</div>
<div class="t hdate" id="hd1" style="left:260.500px;top:69px;letter-spacing:-0.200px">2020-11-19 13:00</div>
<div class="abs" style="left:395px;top:62px;width:1px;height:28px;background:#d4d4d4"></div>
<svg class="abs" style="left:415px;top:63px" width="26" height="26" viewBox="-13 -13 26 26"><circle r="12.200" fill="#c9c9c9"/><path d="M-6.400 0 H4 M-1.200 -5.200 L4.800 0 L-1.200 5.200" fill="none" stroke="#fdfdfd" stroke-width="3" stroke-linejoin="miter"/></svg>
<div class="abs" style="left:0;top:100px;width:460px;height:1px;background:#dadada"></div>
<div class="t hrow" id="hn2" style="left:20.500px;top:119px;letter-spacing:-0.300px">EditFUN-6</div>
<div class="t hdate" id="hd2" style="left:260.500px;top:119px;letter-spacing:-0.200px">2020-11-18 12:18</div>
<div class="abs" style="left:395px;top:112px;width:1px;height:28px;background:#d4d4d4"></div>
<svg class="abs" style="left:415px;top:113px" width="26" height="26" viewBox="-13 -13 26 26"><circle r="12.200" fill="#c9c9c9"/><path d="M-6.400 0 H4 M-1.200 -5.200 L4.800 0 L-1.200 5.200" fill="none" stroke="#fdfdfd" stroke-width="3" stroke-linejoin="miter"/></svg>
<div class="abs" style="left:0;top:150px;width:460px;height:1px;background:#dadada"></div>
<div class="t hrow" id="hn3" style="left:20.500px;top:169px;letter-spacing:-0.300px">EditFUN-5</div>
<div class="t hdate" id="hd3" style="left:260.500px;top:169px;letter-spacing:-0.200px">2020-11-18 12:17</div>
<div class="abs" style="left:395px;top:162px;width:1px;height:28px;background:#d4d4d4"></div>
<svg class="abs" style="left:415px;top:163px" width="26" height="26" viewBox="-13 -13 26 26"><circle r="12.200" fill="#c9c9c9"/><path d="M-6.400 0 H4 M-1.200 -5.200 L4.800 0 L-1.200 5.200" fill="none" stroke="#fdfdfd" stroke-width="3" stroke-linejoin="miter"/></svg>
</div>
<div class="abs" style="left:920px;top:466px;width:8px;height:79px;border-radius:4px;background:#39aff3"></div>
<svg class="abs" style="left:430px;top:250px" width="300" height="170" viewBox="430 250 300 170">
<defs><filter id="sh" x="-10%" y="-10%" width="125%" height="130%"><feGaussianBlur in="SourceAlpha" stdDeviation="1.600"/><feOffset dx="2" dy="2"/><feComponentTransfer><feFuncA type="linear" slope="0.550"/></feComponentTransfer><feMerge><feMergeNode/><feMergeNode in="SourceGraphic"/></feMerge></filter></defs>
<g filter="url(#sh)">
<rect x="438.700" y="258.700" width="228" height="55.800" fill="none" stroke="#d2191e" stroke-width="3"/>
<path d="M572 338.200 L716.300 409.900" stroke="#cf181d" stroke-width="3.100" stroke-linecap="round" fill="none"/><path d="M552 327.500 L578.200 333.200 L569.600 342.800 Z" fill="#ea131a"/>
</g></svg>
<svg class="abs" style="left:470px;top:280px" width="30" height="80" viewBox="470 280 30 80">
<path d="M475 290.500 h14 M482 283.500 v14" stroke="#ffffff" stroke-width="2" fill="none"/>
<path d="M476 339 h5.500 v2.600 h8.700 v9.600 h-14.200 z" fill="none" stroke="#555" stroke-width="1.800" stroke-linejoin="round"/>
<path d="M482.500 338.900 h8.400" stroke="#555" stroke-width="1.800"/>
</svg>
</div>
</body>
</html>
